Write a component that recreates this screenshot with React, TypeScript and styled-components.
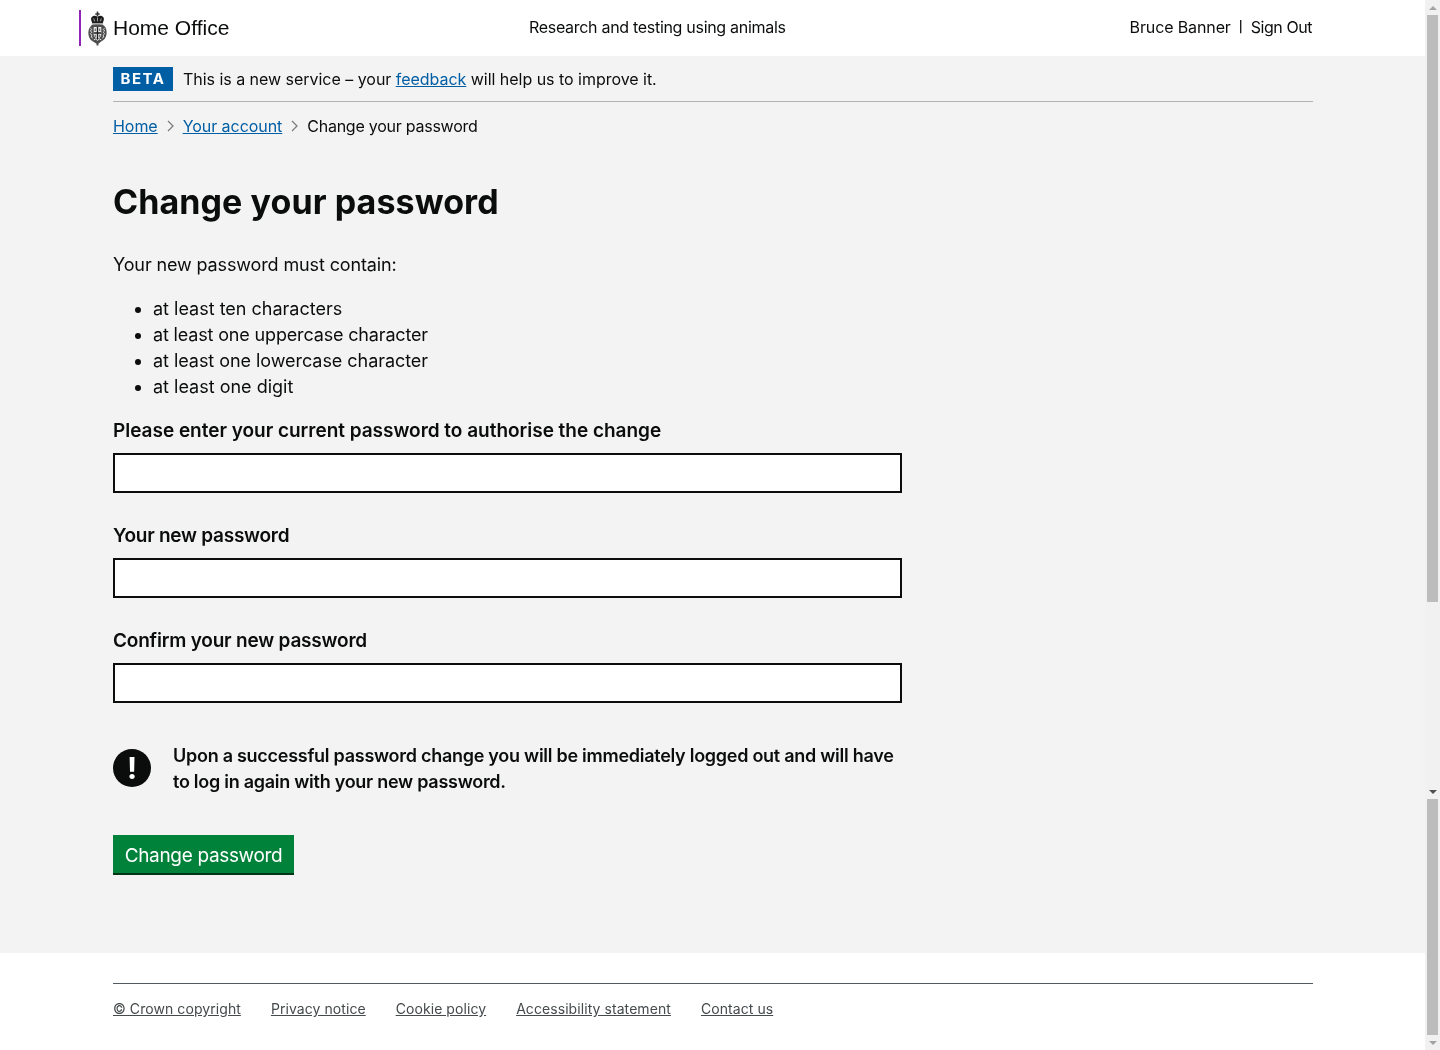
import React from 'react';
import styled, { createGlobalStyle } from 'styled-components';

const GlobalStyle = createGlobalStyle`
  html, body {
    margin: 0;
    height: 100%;
    overflow: hidden;
  }
  body {
    font-family: Inter, "Liberation Sans", sans-serif;
    color: #0b0c0c;
    background: #f3f3f3;
  }
`;

const Frame = styled.div`
  display: flex;
  height: 1050px;
  overflow: hidden;
  will-change: opacity;
`;

const Page = styled.div`
  flex: 1;
  min-width: 0;
  display: flex;
  flex-direction: column;
`;

const Wrapper = styled.div`
  width: 1200px;
  margin-left: 113px;
`;

const Header = styled.header`
  background: #fff;
  height: 56px;
  flex-shrink: 0;
`;

const HeaderInner = styled(Wrapper)`
  height: 100%;
  display: grid;
  grid-template-columns: 416px 1fr auto;
  align-items: center;
  font-size: 16px;
`;

const Logo = styled.a`
  display: flex;
  align-items: center;
  height: 36px;
  margin-left: -34px;
  padding-left: 7px;
  border-left: 2px solid #8f23b3;
  font-family: "Liberation Sans", Arial, sans-serif;
  font-size: 21px;
  color: #0b0c0c;
  svg {
    margin-right: 6px;
  }
`;

const ServiceName = styled.div`
  letter-spacing: -0.3px;
  margin-bottom: 2px;
`;

const UserNav = styled.div`
  display: flex;
  align-items: center;
  gap: 8px;
  margin-bottom: 2px;
`;

const UserName = styled.span`
  letter-spacing: -0.12px;
`;

const NavDivider = styled.span`
  width: 4px;
  text-align: center;
  font-size: 11px;
  font-weight: 600;
`;

const SignOut = styled.span`
  letter-spacing: -0.45px;
  margin-right: 1px;
`;

const Banner = styled.div`
  height: 45px;
  display: flex;
  align-items: center;
  gap: 10px;
  border-bottom: 1px solid #b1b4b6;
  font-size: 16px;
  letter-spacing: -0.03px;
`;

const Tag = styled.strong`
  background: #005ea5;
  color: #fff;
  height: 24px;
  width: 60px;
  display: flex;
  align-items: center;
  justify-content: center;
  font-size: 15px;
  font-weight: 700;
  letter-spacing: 1.500px;
`;

const TextLink = styled.a`
  color: #005ea5;
  text-decoration: underline;
`;

const Breadcrumbs = styled.nav`
  display: flex;
  align-items: center;
  height: 48px;
  font-size: 16px;
  letter-spacing: -0.05px;
`;

const CurrentCrumb = styled.span`
  letter-spacing: -0.25px;
`;

const Chevron = styled.svg`
  margin: 0 8px;
`;

const Main = styled.main`
  flex: 1;
`;

const Title = styled.h1`
  margin: 30px 0 28px;
  font-size: 34px;
  line-height: 44px;
  font-weight: 700;
  letter-spacing: 0.08px;
`;

const Body = styled.p`
  margin: 0 0 18px;
  font-size: 18px;
  line-height: 26px;
  letter-spacing: -0.13px;
`;

const Rules = styled.ul`
  margin: 0 0 18px;
  padding-left: 40px;
  font-size: 18px;
  line-height: 26px;
`;

const Rule = styled.li<{ $spacing: number }>`
  letter-spacing: ${(p) => p.$spacing}px;
`;

const Form = styled.form`
  width: 789px;
`;

const Field = styled.div`
  height: 105px;
`;

const Label = styled.label<{ $spacing: number }>`
  display: block;
  margin-bottom: 9px;
  font-size: 19px;
  line-height: 26px;
  font-weight: 600;
  letter-spacing: ${(p) => p.$spacing}px;
`;

const Input = styled.input`
  display: block;
  width: 100%;
  height: 40px;
  box-sizing: border-box;
  border: 2px solid #0b0c0c;
  background: #fff;
  outline: none;
`;

const Notice = styled.div`
  display: flex;
  align-items: center;
  gap: 22px;
  margin-top: 10px;
  margin-bottom: 40px;
`;

const NoticeIcon = styled.span`
  flex-shrink: 0;
  width: 38px;
  height: 38px;
  margin-bottom: 2px;
  border-radius: 50%;
  background: #0b0c0c;
  color: #fff;
  display: flex;
  align-items: center;
  justify-content: center;
  font-size: 30px;
  font-weight: 700;
`;

const NoticeText = styled.strong`
  font-size: 18px;
  line-height: 26px;
  font-weight: 600;
  letter-spacing: -0.27px;
`;

const SubmitButton = styled.button`
  display: block;
  height: 40px;
  width: 181px;
  padding: 2px 0 0;
  border: 0;
  border-bottom: 2px solid #003618;
  background: #00823b;
  color: #fff;
  font-family: inherit;
  font-size: 19px;
  letter-spacing: -0.33px;
`;

const Footer = styled.footer`
  background: #fff;
  height: 97px;
  flex-shrink: 0;
  padding-top: 30px;
  box-sizing: border-box;
`;

const FooterLinks = styled.div`
  display: flex;
  gap: 30px;
  height: 49px;
  align-items: center;
  border-top: 1px solid #505a5f;
  font-size: 14px;
  letter-spacing: 0.07px;
`;

const FooterLink = styled.a`
  color: #454a4c;
  text-decoration: underline;
`;

const Scrollbar = styled.div`
  width: 15px;
  flex-shrink: 0;
  display: flex;
  flex-direction: column;
  background: #f1f1f1;
`;

const ScrollSegment = styled.div<{ $height: number }>`
  height: ${(p) => p.$height}px;
  display: flex;
  flex-direction: column;
  align-items: center;
`;

const Arrow = styled.div<{ $dir: 'up' | 'down'; $dark?: boolean }>`
  height: 15px;
  flex-shrink: 0;
  display: flex;
  align-items: center;
  justify-content: center;
  &::before {
    content: '';
    border-left: 4px solid transparent;
    border-right: 4px solid transparent;
    ${(p) => (p.$dir === 'up' ? 'border-bottom' : 'border-top')}: 4px solid ${(p) => (p.$dark ? '#505050' : '#a3a3a3')};
  }
`;

const Thumb = styled.div<{ $height: number }>`
  width: 11px;
  height: ${(p) => p.$height}px;
  background: #bcbcbc;
`;

const Spacer = styled.div`
  flex: 1;
`;

const Crest = () => (
  <svg width="19" height="35" viewBox="0 0 20 36" aria-hidden="true">
    {/* cross and crown */}
    <path d="M9.200 0h1.600v2h1.500v1.400h-1.500V5H9.200V3.400H7.700V2h1.500z" fill="#333" />
    <path d="M4 6c2-2 4-1.500 6-.5 2-1 4-1.500 6 .5 1 1 1 3 0 5l-.5 1.500h-11L4 11c-1-2-1-4 0-5z" fill="#1c1c1c" />
    <path d="M6 7.500l1 3M10 6.500v4M14 7.500l-1 3" stroke="#cfcfcf" strokeWidth="0.800" fill="none" />
    <rect x="4" y="12.500" width="12" height="1.500" fill="#9a9a9a" />
    {/* garter */}
    <path d="M3 15c3-1.500 11-1.500 14 0 2 2 3 5 2.500 9-.5 4-3 6.500-6 8L11 34v2H9v-2l-2.500-1.500c-3-1.500-5.500-4-6-8-.5-4 .5-7 2.500-9z" fill="#4e4e4e" />
    <path d="M2.500 18l1.500 1-1.500 1.500 1.500 1.500-1.500 1.500L4 25l-.5 2 1.500 1M17.500 18L16 19l1.500 1.500L16 22l1.500 1.500L16 25l.5 2-1.500 1M6 30l2-1 2 1.500 2-1.500 2 1" fill="none" stroke="#e6e6e6" strokeWidth="1" />
    {/* shield */}
    <path d="M6 16.500h8v8c0 2-2 3.500-4 4.500-2-1-4-2.500-4-4.500z" fill="#ececec" />
    <path d="M9.300 16.500h1.400V29H9.300zM6 22h8v1.400H6z" fill="#1c1c1c" />
    <path d="M7 18h1.500v2.500H7zM11.500 18H13v2.500h-1.500zM7 24.500h1.500V27H7zM11.500 24.500H13V27h-1.500z" fill="#777" />
  </svg>
);

const BreadcrumbChevron = () => (
  <Chevron width="9" height="12" viewBox="0 0 9 12" aria-hidden="true">
    <path d="M2 1l5 5-5 5" fill="none" stroke="#7d7d7d" strokeWidth="1.300" />
  </Chevron>
);

const fields = [
  { label: 'Please enter your current password to authorise the change', spacing: -0.02 },
  { label: 'Your new password', spacing: -0.25 },
  { label: 'Confirm your new password', spacing: -0.2 },
];

const rules = [
  { text: 'at least ten characters', spacing: 0 },
  { text: 'at least one uppercase character', spacing: -0.16 },
  { text: 'at least one lowercase character', spacing: -0.05 },
  { text: 'at least one digit', spacing: 0 },
];

const footerLinks = [
  '© Crown copyright',
  'Privacy notice',
  'Cookie policy',
  'Accessibility statement',
  'Contact us',
];

const App: React.FC = () => (
  <>
    <GlobalStyle />
    <Frame>
      <Page>
        <Header>
          <HeaderInner>
            <Logo>
              <Crest />
              Home Office
            </Logo>
            <ServiceName>Research and testing using animals</ServiceName>
            <UserNav>
              <UserName>Bruce Banner</UserName>
              <NavDivider>|</NavDivider>
              <SignOut>Sign Out</SignOut>
            </UserNav>
          </HeaderInner>
        </Header>
        <Main>
          <Wrapper>
            <Banner>
              <Tag>BETA</Tag>
              <span>
                This is a new service – your <TextLink href="#">feedback</TextLink> will help us to improve it.
              </span>
            </Banner>
            <Breadcrumbs>
              <TextLink href="#">Home</TextLink>
              <BreadcrumbChevron />
              <TextLink href="#">Your account</TextLink>
              <BreadcrumbChevron />
              <CurrentCrumb>Change your password</CurrentCrumb>
            </Breadcrumbs>
            <Title>Change your password</Title>
            <Body>Your new password must contain:</Body>
            <Rules>
              {rules.map((rule) => (
                <Rule key={rule.text} $spacing={rule.spacing}>
                  {rule.text}
                </Rule>
              ))}
            </Rules>
            <Form>
              {fields.map((field) => (
                <Field key={field.label}>
                  <Label $spacing={field.spacing}>{field.label}</Label>
                  <Input type="password" />
                </Field>
              ))}
              <Notice>
                <NoticeIcon>!</NoticeIcon>
                <NoticeText>
                  Upon a successful password change you will be immediately logged out and will have to log in again with your new password.
                </NoticeText>
              </Notice>
              <SubmitButton type="button">Change password</SubmitButton>
            </Form>
          </Wrapper>
        </Main>
        <Footer>
          <Wrapper>
            <FooterLinks>
              {footerLinks.map((link) => (
                <FooterLink href="#" key={link}>
                  {link}
                </FooterLink>
              ))}
            </FooterLinks>
          </Wrapper>
        </Footer>
      </Page>
      <Scrollbar>
        <ScrollSegment $height={799}>
          <Arrow $dir="up" />
          <Thumb $height={587} />
          <Spacer />
          <Arrow $dir="down" $dark />
        </ScrollSegment>
        <ScrollSegment $height={251}>
          <Thumb $height={236} />
          <Arrow $dir="down" />
        </ScrollSegment>
      </Scrollbar>
    </Frame>
  </>
);

export default App;
